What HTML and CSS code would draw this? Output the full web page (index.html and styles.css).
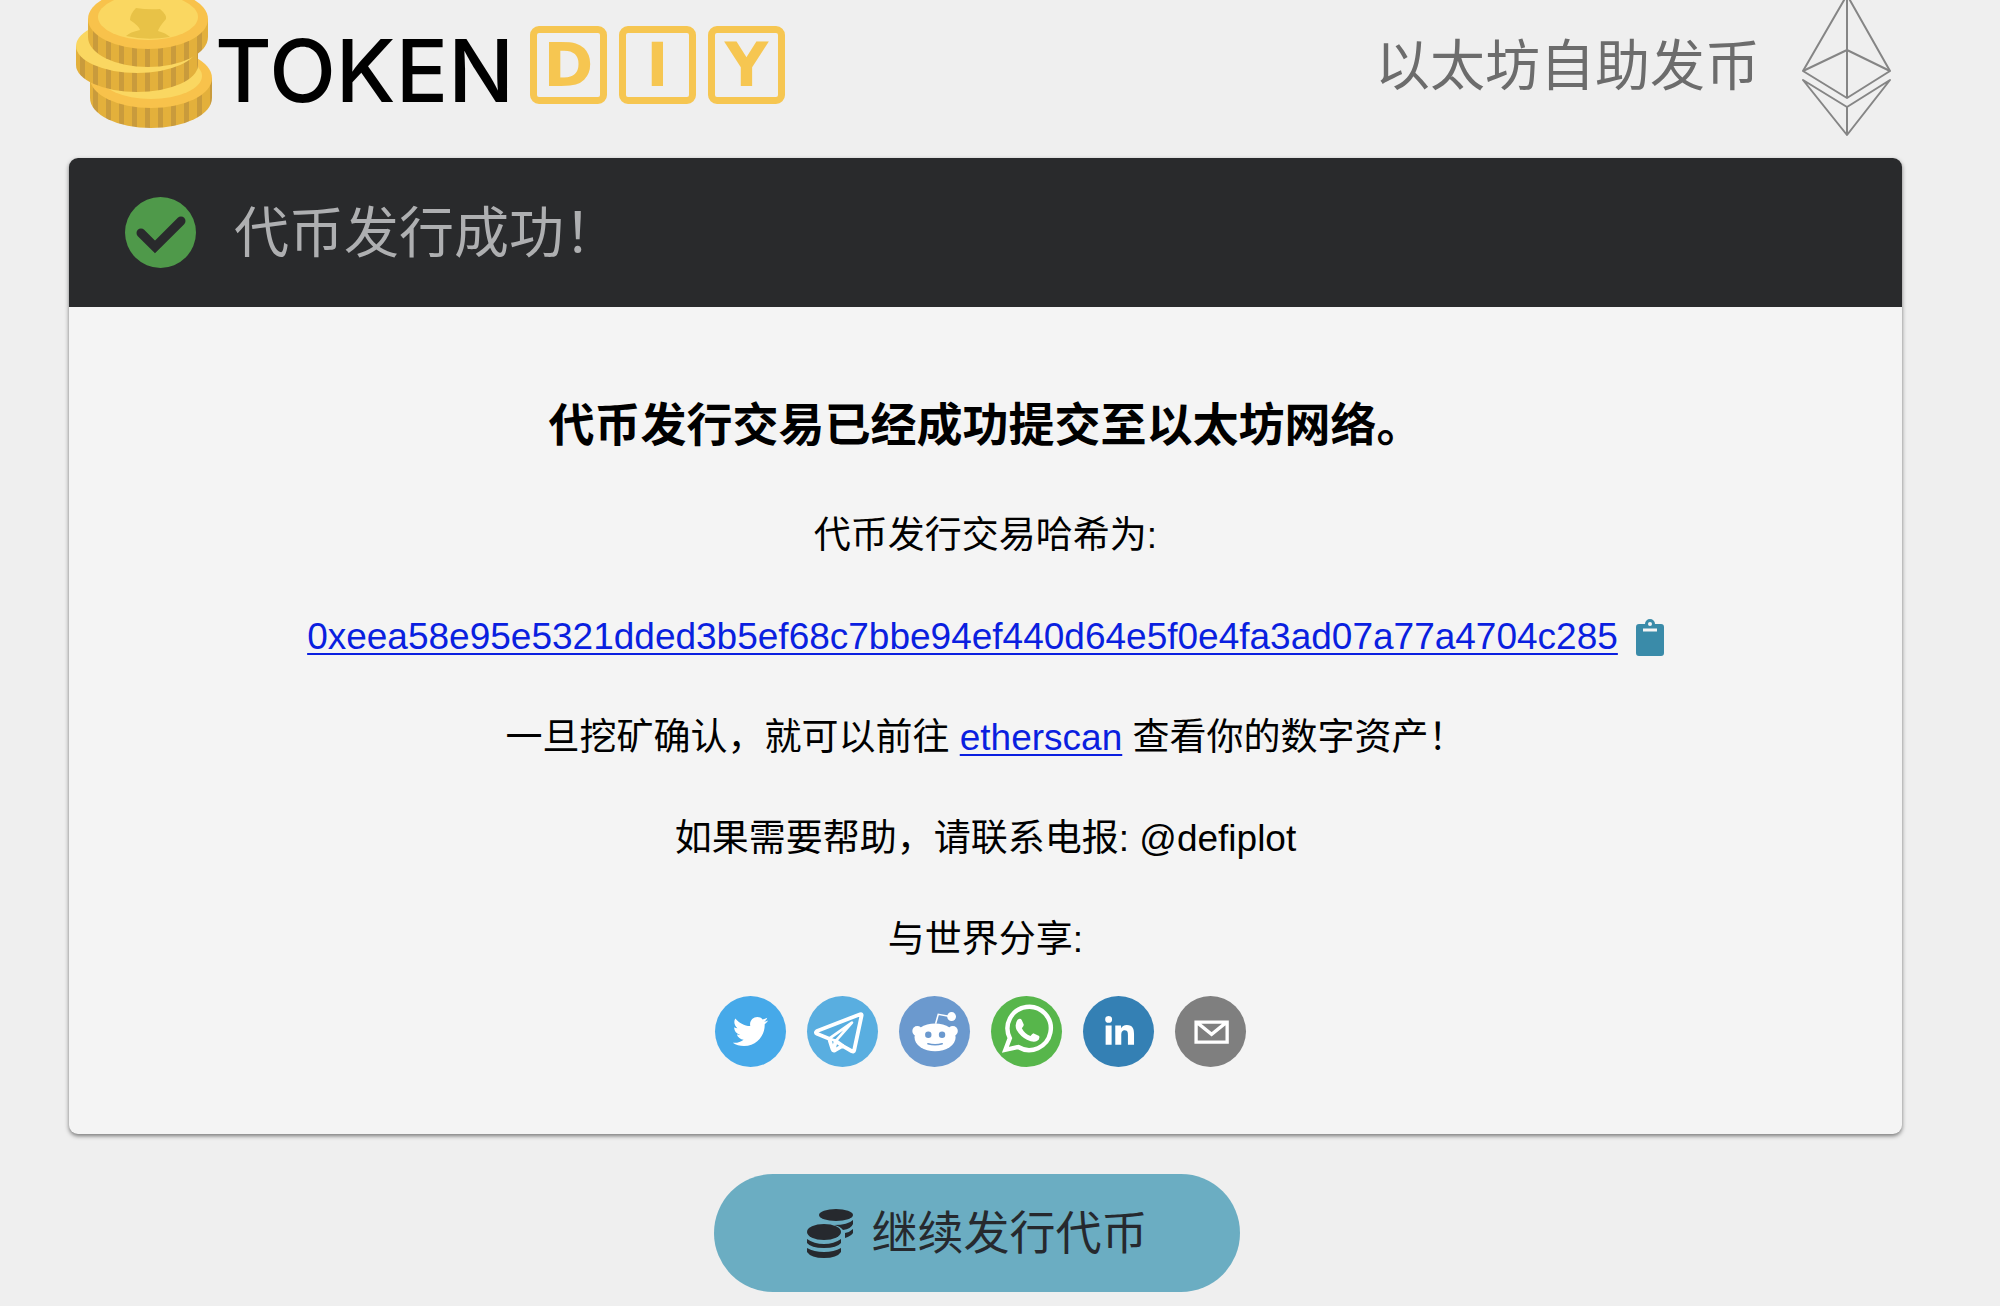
FILE: index.html
```html
<!DOCTYPE html>
<html lang="zh-CN">
<head>
    <meta charset="UTF-8">
    <meta name="viewport" content="width=device-width, initial-scale=1.0">
    <title>TokenDIY - 以太坊自助发币</title>
    <link rel="stylesheet" href="styles.css">
</head>
<body>
    <header class="header">
        <div class="logo">
            <svg class="logo-coins" viewBox="0 0 137 130" aria-hidden="true">
                <defs>
                    <pattern id="ridges" width="13" height="130" patternUnits="userSpaceOnUse">
                        <rect width="13" height="130" fill="#e3b03b"/>
                        <rect x="4" width="5" height="130" fill="#c99b3c"/>
                    </pattern>
                </defs>
                <!-- bottom coin -->
                <path d="M14 78v20a61 30 0 0 0 122 0V78z" fill="url(#ridges)"/>
                <ellipse cx="75" cy="78" rx="61" ry="30" fill="#f8c24b"/>
                <ellipse cx="75" cy="76" rx="51" ry="23" fill="#fad761"/>
                <!-- middle coin -->
                <path d="M0 46v19a61 27 0 0 0 122 0V46z" fill="url(#ridges)"/>
                <ellipse cx="61" cy="46" rx="61" ry="27" fill="#fad761"/>
                <!-- top coin -->
                <path d="M12 19v18a60 30 0 0 0 120 0V19z" fill="url(#ridges)"/>
                <ellipse cx="72" cy="19" rx="60" ry="30" fill="#f8c24b"/>
                <ellipse cx="72" cy="17" rx="50" ry="23" fill="#fad761"/>
                <path d="M60 8q12 2 24 1 7 6 6 10-7 8-8 12 8 2 12 6-23 4-44-1 4-4 14-6-1-4-10-10 0-6 6-12z" fill="#e8c247"/>
            </svg>
            <span class="logo-name">TOKEN</span>
            <span class="logo-box">D</span>
            <span class="logo-box">I</span>
            <span class="logo-box">Y</span>
        </div>
        <div class="network">
            <span>以太坊自助发币</span>
            <svg class="eth" viewBox="0 0 90 148" aria-hidden="true">
                <g fill="none" stroke="#858585" stroke-width="2" stroke-linejoin="round">
                    <path d="M45-5L1 71l44 27 43-27z"/>
                    <path d="M1 71l44-21 43 21M45-5V98"/>
                    <path d="M1 80l44 27 43-27-43 55zM45 107v28"/>
                </g>
            </svg>
        </div>
    </header>

    <main>
        <section class="card">
            <div class="card-header">
                <svg class="check" viewBox="0 0 71 71" aria-hidden="true">
                    <circle cx="35.5" cy="35.5" r="35.5" fill="#4f994a"/>
                    <path d="M16 36l14 14 26-26" fill="none" stroke="#292a2c" stroke-width="9" stroke-linecap="round"/>
                </svg>
                <h1>代币发行成功！</h1>
            </div>
            <div class="card-body">
                <h2>代币发行交易已经成功提交至以太坊网络。</h2>
                <p>代币发行交易哈希为:</p>
                <p class="hash">
                    <a href="#tx">0xeea58e95e5321dded3b5ef68c7bbe94ef440d64e5f0e4fa3ad07a77a4704c285</a>
                    <button class="copy" type="button" aria-label="复制">
                        <svg viewBox="0 0 28 37">
                            <path d="M3 5h6a5 5 0 0 1 10 0h6a3 3 0 0 1 3 3v26a3 3 0 0 1-3 3H3a3 3 0 0 1-3-3V8a3 3 0 0 1 3-3z" fill="#3a8ba9"/>
                            <circle cx="14" cy="5" r="2" fill="#f4f4f4"/>
                            <path d="M7 11h14" stroke="#f4f4f4" stroke-width="3"/>
                        </svg>
                    </button>
                </p>
                <p>一旦挖矿确认，就可以前往 <a href="#etherscan">etherscan</a> 查看你的数字资产！</p>
                <p>如果需要帮助，请联系电报: @defiplot</p>
                <p>与世界分享:</p>
                <div class="share">
                    <a class="twitter" href="#twitter" aria-label="Twitter">
                        <svg viewBox="0 0 64 64">
                            <path fill="#fff" d="M48 22.1c-1.2.5-2.4.9-3.8 1 1.4-.8 2.4-2.1 2.9-3.6-1.3.8-2.7 1.3-4.2 1.6C41.7 19.8 40 19 38.2 19c-3.6 0-6.6 2.9-6.6 6.6 0 .5.1 1 .2 1.5-5.5-.3-10.3-2.9-13.5-6.9-.6 1-.9 2.1-.9 3.3 0 2.3 1.2 4.3 2.9 5.5-1.1 0-2.1-.3-3-.8v.1c0 3.2 2.3 5.8 5.3 6.4-.6.1-1.1.2-1.7.2-.4 0-.8 0-1.2-.1.8 2.6 3.3 4.5 6.1 4.6-2.2 1.8-5.1 2.8-8.2 2.8-.5 0-1.1 0-1.6-.1 2.9 1.9 6.4 2.9 10.1 2.9 12.1 0 18.7-10 18.7-18.7v-.8c1.2-1 2.3-2.1 3.2-3.4z"/>
                        </svg>
                    </a>
                    <a class="telegram" href="#telegram" aria-label="Telegram">
                        <svg viewBox="0 0 64 64">
                            <g fill="none" stroke="#fff" stroke-width="3.5" stroke-linejoin="round" stroke-linecap="round">
                                <path d="M9 31.5L48 16.500q1.500-.5 1.200 1.200L42.500 49q-.5 1.500-2 .8L32 45l-7 4q-1.500.5-2-1l-3-9.500-11-4.500q-2-1 0-2.500z"/>
                                <path d="M20 38.500L40.500 24 26 40.500z" stroke-width="2.500"/>
                                <path d="M26 40.500l6 4.500M26 40.500L24 48"/>
                            </g>
                        </svg>
                    </a>
                    <a class="reddit" href="#reddit" aria-label="Reddit">
                        <svg viewBox="0 0 64 64">
                            <path d="M33 25l2.400-8.500L46 18.500" fill="none" stroke="#fff" stroke-width="1.400"/>
                            <g fill="#fff">
                                <circle cx="47.400" cy="18.500" r="4"/>
                                <circle cx="16.500" cy="31.500" r="4.500"/>
                                <circle cx="48.500" cy="31.500" r="4.500"/>
                                <ellipse cx="32.500" cy="37.300" rx="18.500" ry="12.500"/>
                            </g>
                            <circle cx="26.400" cy="35" r="2.900" fill="#6b99ce"/>
                            <circle cx="38.800" cy="35" r="2.900" fill="#6b99ce"/>
                            <path d="M26 43q6.500 2 13 0" fill="none" stroke="#6b99ce" stroke-width="1.300" stroke-linecap="round"/>
                        </svg>
                    </a>
                    <a class="whatsapp" href="#whatsapp" aria-label="WhatsApp">
                        <svg viewBox="0 0 64 64">
                            <path d="M13 48.500l4-10.500a19.500 19.500 0 1 1 7.500 8z" fill="none" stroke="#fff" stroke-width="4"/>
                            <path fill="#fff" d="M24 21.500q2.500-2 3.800.3l1.700 4q.3 1-1.700 3.200 2.500 5 7.800 7 2-2.600 3-2.300l4.800 2.300q1 3-2 4.600-3.500 1.500-9-1.200-6-3-9.400-9-2-5 1-8.900z"/>
                        </svg>
                    </a>
                    <a class="linkedin" href="#linkedin" aria-label="LinkedIn">
                        <svg viewBox="0 0 64 64">
                            <path fill="#fff" d="M20.400 44h5.400V26.600h-5.400V44zM23.100 18a3.100 3.100 0 1 0 0 6.200 3.100 3.100 0 0 0 0-6.200zM39.500 26.200c-2.600 0-4.400 1.400-5.100 2.800h-.1v-2.400h-5.200V44h5.400v-8.600c0-2.300.4-4.500 3.200-4.500s2.800 2.600 2.800 4.600V44H46v-9.500c0-4.700-1-8.300-6.500-8.300z"/>
                        </svg>
                    </a>
                    <a class="email" href="#email" aria-label="Email">
                        <svg viewBox="0 0 64 64">
                            <path d="M19 23.500h28v18H19zM20 24l13 10.500L46 24" fill="none" stroke="#fff" stroke-width="3"/>
                        </svg>
                    </a>
                </div>
            </div>
        </section>

        <div class="actions">
            <button class="again" type="button">
                <svg class="again-icon" viewBox="0 0 48 50" aria-hidden="true">
                    <g fill="#26292e">
                        <ellipse cx="30" cy="7" rx="17" ry="6"/>
                        <path d="M47 12v4q-2 5-10 6-3-4-9-5 14 0 19-5zM47 21v4q-2 3-8 5v-5q5-1 8-4z"/>
                        <ellipse cx="18" cy="24" rx="17" ry="8"/>
                        <path d="M1 31q7 5 17 5t17-5v4q-4 5-17 5T1 35zM1 40q7 4 17 4t17-4v4q-4 6-17 6T1 44z"/>
                    </g>
                </svg>
                继续发行代币
            </button>
        </div>
    </main>
</body>
</html>
```
FILE: styles.css
```css
* {
    box-sizing: border-box;
}
body {
    margin: 0;
    padding: 0 98px 12px 69px;
    background: #efefef;
    color: #000;
    font-family: "Liberation Sans", "Noto Sans CJK SC", sans-serif;
    font-size: 37px;
    line-height: 44px;
}
h1, h2, p {
    margin: 0;
}
svg {
    display: block;
}

.header {
    display: flex;
    justify-content: space-between;
    align-items: flex-start;
    height: 158px;
    padding: 0 10px 0 7px;
}
.logo {
    display: flex;
    align-items: center;
    gap: 12px;
}
.logo-coins {
    width: 137px;
    height: 130px;
}
.logo-name {
    margin: 0 4px 0 -10px;
    padding-top: 12px;
    font-family: Inter, sans-serif;
    font-size: 87px;
    font-weight: 500;
    line-height: 100px;
}
.logo-box {
    display: flex;
    align-items: center;
    justify-content: center;
    width: 77px;
    height: 78px;
    border: 7px solid #f6c651;
    border-radius: 9px;
    color: #f6c651;
    font-family: "DejaVu Sans", sans-serif;
    font-size: 60px;
    font-weight: bold;
}
.network {
    display: flex;
    align-items: flex-start;
    gap: 42px;
    color: #6c6c6c;
    font-size: 55px;
    line-height: 132px;
}
.eth {
    width: 90px;
    height: 148px;
}

.card {
    overflow: hidden;
    border-radius: 9px;
    background: #f4f4f4;
    box-shadow: 0 2px 4px rgba(0, 0, 0, 0.5);
}
.card-header {
    display: flex;
    align-items: center;
    gap: 38px;
    height: 149px;
    padding: 0 56px;
    background: #292a2c;
    color: #aeafb1;
}
.card-header h1 {
    font-size: 55px;
    font-weight: normal;
    line-height: 64px;
}
.check {
    width: 71px;
    height: 71px;
}
.card-body {
    padding: 90px 56px 67px;
    text-align: center;
}
.card-body h2 {
    margin-bottom: 61px;
    font-size: 46px;
    line-height: 56px;
}
.card-body p {
    margin-bottom: 57px;
}
.card-body p:last-of-type {
    margin-bottom: 34px;
}
.card-body p a {
    color: #0a1fe0;
    text-decoration-thickness: 2px;
    text-underline-offset: 4px;
}
.hash {
    display: flex;
    align-items: center;
    justify-content: center;
    gap: 18px;
}
.copy {
    width: 28px;
    padding: 0;
    border: 0;
    background: none;
    cursor: pointer;
}

.share {
    display: flex;
    justify-content: center;
    gap: 21px;
    padding-right: 10px;
}
.share a {
    width: 71px;
    height: 71px;
    border-radius: 50%;
}
.twitter {
    background: #46a9e9;
}
.telegram {
    background: #59aee0;
}
.reddit {
    background: #6b99ce;
}
.whatsapp {
    background: #57b64b;
}
.linkedin {
    background: #3480b4;
}
.email {
    background: #7f7f7f;
}

.actions {
    display: flex;
    justify-content: center;
    padding: 40px 18px 0 0;
}
.again {
    display: flex;
    align-items: center;
    gap: 18px;
    height: 118px;
    padding: 0 92px;
    border: 0;
    border-radius: 59px;
    background: #6badc2;
    color: #26292e;
    font-family: inherit;
    font-size: 46px;
    line-height: 56px;
    cursor: pointer;
}
.again-icon {
    width: 48px;
    height: 50px;
}
```
